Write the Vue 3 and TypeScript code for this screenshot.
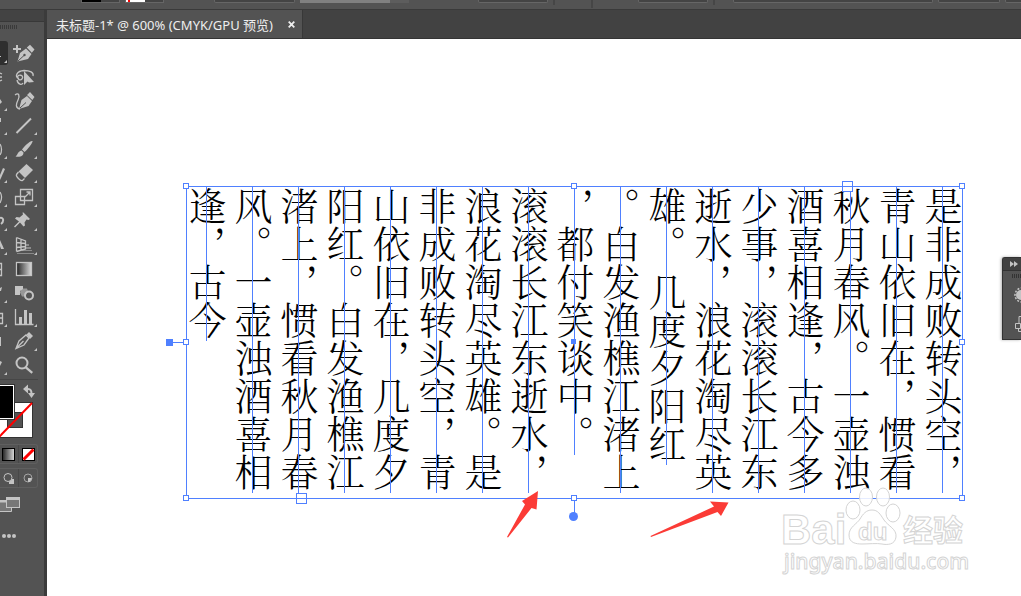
<script setup lang="ts">
const columns: string[] = [
  '是非成败转头空，',
  '青山依旧在，惯看',
  '秋月春风。一壶浊',
  '酒喜相逢，古今多',
  '少事，滚滚长江东',
  '逝水，浪花淘尽英',
  '雄。 几度夕阳红',
  '。白发渔樵江渚上',
  '，都付笑谈中。',
  '滚滚长江东逝水，',
  '浪花淘尽英雄。是',
  '非成败转头空，青',
  '山依旧在，几度夕',
  '阳红。白发渔樵江',
  '渚上，惯看秋月春',
  '风。一壶浊酒喜相',
  '逢，古今',
]

interface Tool {
  name: string
  more: boolean
  svg: string
  leftSvg: string
  leftMore: boolean
}

const tools: Tool[] = [
  { name: '添加锚点', more: false, leftMore: true, leftSvg: '<path d="M0 15h1v1h-1z"/>',
    svg: '<path d="M4 4h2v3h3v2h-3v3h-2v-3h-3v-2h3z"/><path d="M5.500 20.500 8 12l6-4.500 5.500 5.500-3.500 5zM14.800 6.600 18 3.800l4.500 4.700-2.700 3.200z"/><path class="cut" d="M6 20l6-5.500"/><circle cx="12.500" cy="14" r="1.200" fill="#535353"/>' },
  { name: '套索', more: false, leftMore: false, leftSvg: '<path class="ln" d="M0 8l2 1M0 12h2M0 16l2-1"/>',
    svg: '<path class="ln" d="M7 14c-5-3-2-8 5-8.500 6 0 10 2 9 5.500M5.500 12c1-3 6-2 5 1s-5 2-4-.500M5 15c1 5 5 5 6 3"/><path d="M12 6v14l3.500-3.500 1.500 1 5-.5z"/>' },
  { name: '曲率', more: false, leftMore: true, leftSvg: '<path d="M0 10l2 3-2 2z"/>',
    svg: '<path class="ln" d="M3 6c4-3 5 1 3 5s-3 8 2 9"/><path d="M7 20 9.500 11l5.500-4 5 5-3.500 5zM15 6 18 3l4.500 5-2.200 3z"/><path class="cut" d="M8 19l6-5.500"/>' },
  { name: '直线段', more: true, leftMore: true, leftSvg: '<path d="M0 5h1v4h-1z"/>', svg: '<path class="ln2" d="M4.500 20 19 5.500"/>' },
  { name: '画笔', more: true, leftMore: true, leftSvg: '<path class="ln" d="M0 7c2 3 2 8 0 11"/>',
    svg: '<path d="M20.500 4c1 1-6 10-8 11l-2.500-2.500c1-2 8.500-9.500 10.500-8.500zM9.500 13.500l2 2c0 4-4 5-8 4 2-1 2-5 6-6z"/>' },
  { name: '橡皮擦', more: true, leftMore: true, leftSvg: '<path d="M0 14l3-7 2 1-4 9-1 2z"/>',
    svg: '<path d="M14.500 3 21 9 13 17 6.500 10.500z"/><path class="ln" d="M6.500 11 4.500 13.500c-1 1.500 4 7 6 6l2-2"/>' },
  { name: '比例缩放', more: true, leftMore: true, leftSvg: '<path class="ln" d="M0 7c2 3 2 7 0 11"/>',
    svg: '<path class="ln" d="M8.500 4.500h12v11h-12zM3.500 11.500h9v8h-9zM13 12l5-5M14.500 7h3.500v3.500"/>' },
  { name: '操控变形', more: true, leftMore: true, leftSvg: '<path class="ln2" d="M0 9c4-1 4 4 1 6"/>',
    svg: '<path d="M11.500 3.500 18 10l-1.500 1-2-.5-2 3 .5 3-1.500 1-3.500-4-5 5-1-1 5-5-4-3 1.500-1.500 3 .500 3.500-3-.500-2z"/>' },
  { name: '透视网格', more: true, leftMore: true, leftSvg: '<path d="M0 7l4 9h-3l-1-3z"/>',
    svg: '<path class="ln" d="M4.500 4.500v14M4.500 4.500 13.500 8v8l-9 2.500M9 6.500v11M4.500 9.500l9 1M4.500 14.500l9-1"/><path d="M14 11h3v2h-3zM14 14h5v2h-5zM10 17h10v1h-10zM5 20h17v1h-17z" opacity=".5"/>' },
  { name: '渐变', more: false, leftMore: false, leftSvg: '<path class="ln" d="M0 6.500h1.500v12h-1.500M0 12.500h2"/>',
    svg: '<rect class="ln" x="4.500" y="5.500" width="15" height="13" style="fill:url(#ramp)"/>' },
  { name: '混合', more: false, leftMore: true, leftSvg: '<path d="M0 7l2-1-1 4h-1z"/>',
    svg: '<path d="M3 5h8v3l-3 2v4h-5z"/><path d="M9 7.500h6l1 3-3 5h-3l-2-4z" opacity=".6"/><circle class="ln2" cx="17" cy="14.500" r="4"/>' },
  { name: '柱形图', more: true, leftMore: true, leftSvg: '<path class="ln" d="M0 8.500h2.500v10h-2.500M0 13h2"/>',
    svg: '<path class="ln" d="M3.500 4v15.500h18"/><path d="M7 12h3v7h-3zM12 5h3v14h-3zM17 8h3v11h-3z"/>' },
  { name: '切片', more: true, leftMore: false, leftSvg: '<path d="M0 8h1v9h-1z"/>',
    svg: '<path class="ln" d="M4 19.500 7 12l7-6 3 3-5 7zM4.500 19l7-7"/><path d="M14.500 5.500 17 3l4 4-3 3z"/>' },
  { name: '缩放', more: false, leftMore: true, leftSvg: '<path d="M0 8l2 1-2 4z"/>',
    svg: '<circle class="ln2" cx="10" cy="10" r="5.500"/><path d="M14 13l7 6-1.500 1.800-7-6z"/>' },
]
</script>

<template>
  <div class="app">
    <header class="options">
      <span class="swatch black"></span>
      <span class="swatch red"></span>
      <span class="combo c1"></span>
      <span class="strip"></span>
      <span class="strip dim"></span>
      <span class="combo c2"></span>
      <span class="rule"></span>
      <span class="rule far"></span>
      <span class="combo c3"></span>
      <span class="rule near"></span>
      <span class="combo c4"></span>
      <span class="combo c5"></span>
      <span class="combo c6"></span>
    </header>

    <div class="body">
      <aside class="toolbar">
        <div class="tool-head"></div>
        <div class="grip"></div>
        <svg class="defs" width="0" height="0">
          <linearGradient id="ramp"><stop offset="0" stop-color="#222" /><stop offset="1" stop-color="#ddd" /></linearGradient>
        </svg>
        <div v-for="(t, i) in tools" :key="t.name" class="tool-row">
          <button class="tool half" :class="{ active: i === 0 }" :aria-label="t.name + '组'">
            <svg width="8" height="24" viewBox="0 0 8 24"><g v-html="t.leftSvg"></g><path v-if="t.leftMore" d="M7 19v3h-3z" /></svg>
          </button>
          <button class="tool" :aria-label="t.name">
            <svg width="28" height="24" viewBox="0 0 28 24"><g v-html="t.svg"></g><path v-if="t.more" d="M25 19v3h-3z" /></svg>
          </button>
        </div>
        <div class="divider"></div>
        <svg class="colors" width="44" height="64" viewBox="0 0 44 64">
          <path d="M0 22h33v36H0z" fill="#333" /><path d="M0 23h32v34H0z" fill="#fff" />
          <path d="M7 32h16v16H7z" fill="#333" /><path d="M8 33h14v14H8z" fill="#535353" />
          <path d="M-1 57 32 23" stroke="#f00" stroke-width="2" />
          <path d="M0 4h15v36H0z" fill="#333" /><path d="M0 5h14v34H0z" fill="#fff" /><path d="M0 6h13v32H0z" fill="#000" />
          <path d="M27 9c4-.5 4.500 2 4.500 5" fill="none" stroke="#c4c4c4" stroke-width="2" />
          <path d="M23 9l5-4.500v9zM28 13h7L31.500 18z" />
        </svg>
        <div class="modes">
          <button aria-label="渐变填色"><svg width="15" height="15" viewBox="0 0 15 15"><rect x="1.500" y="1.500" width="12" height="12" fill="url(#ramp)" stroke="#000" /></svg></button>
          <button aria-label="无填色"><svg width="15" height="15" viewBox="0 0 15 15"><rect x="1.500" y="1.500" width="12" height="12" fill="#fff" stroke="#000" /><path d="M2.500 12.500l10-10" stroke="#f00" stroke-width="3" /></svg></button>
        </div>
        <div class="modes">
          <button aria-label="背面绘图"><svg width="15" height="15" viewBox="0 0 15 15"><path d="M8 8h5v5H8z" /><circle cx="7" cy="6.500" r="4" fill="#535353" stroke="#c4c4c4" /></svg></button>
          <button aria-label="内部绘图"><svg width="15" height="15" viewBox="0 0 15 15"><circle cx="7" cy="7" r="4" fill="none" stroke="#a4a4a4" /><path d="M7 7h4l-2 4H7z" /></svg></button>
        </div>
        <button class="screen" aria-label="屏幕模式">
          <svg width="22" height="18" viewBox="0 0 22 18"><path d="M0 4h7v2H0z" /><path d="M0 6h11.500v9.500H0" fill="#777" stroke="#c4c4c4" /><rect x="6.500" y="1.500" width="13" height="10" fill="#777" stroke="#c4c4c4" /><path d="M6 1h14v3H6z" /></svg>
        </button>
        <button class="more" aria-label="编辑工具栏"><i></i><i></i><i></i></button>
      </aside>

      <section class="workspace">
        <nav class="tabs">
          <div class="tab">
            <span>未标题-1* @ 600% (CMYK/GPU 预览)</span>
            <button class="close" aria-label="关闭"><svg width="7" height="7" viewBox="0 0 7 7"><path d="M.7.700l5.600 5.600M6.300.700.700 6.300" stroke="#eee" stroke-width="1.800" /></svg></button>
          </div>
        </nav>

        <main class="canvas">
          <div class="frame">
            <p v-for="(c, i) in columns" :key="i" class="column">{{ c }}</p>
            <i class="h tl"></i><i class="h tc"></i><i class="h tr"></i>
            <i class="h ml"></i><i class="h mr"></i>
            <i class="h bl"></i><i class="h bc"></i><i class="h br"></i>
            <i class="port in"></i><i class="port out"></i>
            <i class="center"></i>
            <i class="stem-left"></i><i class="knob-left"></i>
            <i class="stem-down"></i><i class="knob-down"></i>
          </div>

          <svg class="arrow a1" width="34" height="50" viewBox="0 0 34 50"><path d="M1 48 19 15.500 16 12 32 2 30.500 20.500 25.500 19 2 48.500z" /></svg>
          <svg class="arrow a2" width="82" height="42" viewBox="0 0 82 42"><path d="M1.500 37 65 7.500 61 2.500 79.500 3.500 72 17 68.500 13 2 38z" /></svg>

          <svg class="watermark" width="200" height="96" viewBox="0 0 200 96">
            <g class="outline">
              <text x="0" y="62" class="bai">Bai</text>
              <ellipse cx="72" cy="28" rx="7" ry="9" /><ellipse cx="85" cy="15" rx="6.500" ry="9" />
              <ellipse cx="102" cy="15" rx="6.500" ry="9" /><ellipse cx="112" cy="31" rx="7" ry="9" />
              <path d="M91 28c6 0 8 4 12 10s13 9 12 17-9 8-14 7-14 0-20 0-13-1-13-9 8-11 11-16 6-9 12-9z" />
              <text x="77" y="58" class="du">du</text>
              <text x="122" y="59" class="jy">经验</text>
              <text x="3" y="87" class="url">jingyan.baidu.com</text>
            </g>
          </svg>

          <aside class="dock">
            <div class="dock-head"><svg width="8" height="6" viewBox="0 0 8 6"><path d="M0 0l4 3-4 3zM4 0l4 3-4 3z" /></svg></div>
            <div class="dock-grip"></div>
            <svg width="19" height="61" viewBox="0 0 19 61"><circle cx="19" cy="17" r="7" fill="none" stroke="#c4c4c4" stroke-width="1.500" stroke-dasharray="2 1.500" /><circle cx="18" cy="17" r="5" /><path d="M20 38.500h-4v7M12.500 45.500h5v5h-5zM15.500 51v2.500H20" fill="none" stroke="#c4c4c4" /></svg>
          </aside>
        </main>
      </section>
    </div>
  </div>
</template>

<style>
body {
  margin: 0;
}
.ln,
.ln2 {
  fill: none;
  stroke: #c4c4c4;
  stroke-width: 1.3;
}
.ln2 {
  stroke-width: 2;
}
.cut {
  fill: none;
  stroke: #535353;
  stroke-width: 1;
}
</style>

<style scoped>
.app {
  display: flex;
  flex-direction: column;
  min-height: 100vh;
  overflow: hidden;
  background: #535353;
  font-family: "Noto Sans", "Noto Sans CJK SC", sans-serif;
}
button {
  padding: 0;
  border: 0;
  background: none;
}
svg {
  display: block;
  fill: #c4c4c4;
}
.options {
  display: flex;
  height: 9px;
  overflow: hidden;
  padding-left: 81px;
  border-bottom: 1px solid #3a3a3a;
}
.options > span {
  flex: none;
  box-sizing: border-box;
}
.swatch {
  width: 39px;
  height: 3px;
  margin-right: 5px;
  border: 1px solid #666;
  border-top: 0;
  background: linear-gradient(90deg, #000 19px, #444 19px);
}
.swatch.red {
  background: linear-gradient(90deg, #fff 2px, #f00 2px, #f00 4px, #fff 4px, #fff 19px, #444 19px);
}
.combo {
  height: 3px;
  border: 1px solid #666;
  border-top: 0;
  border-radius: 0 0 2px 2px;
  background: #444;
}
.c1 { width: 81px; margin-left: 45px; }
.strip { width: 90px; height: 3px; margin-left: 5px; background: #808080; }
.strip.dim { width: 19px; margin: 0; background: #5d5d5d; }
.c2 { width: 70px; margin-left: 69px; }
.rule { width: 2px; height: 5px; margin-left: 5px; background: #464646; }
.rule.far { height: 8px; margin-left: 36px; }
.c3 { width: 70px; margin-left: 45px; }
.rule.near { margin-left: 5px; }
.c4 { width: 200px; margin-left: 18px; }
.c5 { width: 62px; margin-left: 5px; }
.c6 { width: 62px; margin-left: 5px; }

.body {
  display: flex;
  flex: 1;
}
.toolbar {
  flex: none;
  box-sizing: border-box;
  width: 47px;
  border-right: 3px solid #3b3b3b;
  overflow: hidden;
}
.tool-head {
  height: 11px;
  background: #434343;
  border-bottom: 1px solid #383838;
}
.grip {
  width: 18px;
  height: 4px;
  margin: 3px 0 12px;
  background: repeating-linear-gradient(90deg, #3a3a3a 0 1px, #535353 1px 2px);
}
.defs {
  position: absolute;
}
.tool-row {
  display: flex;
  gap: 4px;
  height: 24px;
}
.tool.half {
  width: 8px;
}
.tool.active {
  background: #2f2f2f;
  border-radius: 0 3px 3px 0;
}
.divider {
  height: 1px;
  margin: 2px 6px 0 0;
  background: #464646;
}
.modes {
  display: flex;
  width: 37px;
  margin-bottom: 4px;
  border: 1px solid #5f5f5f;
  border-left: 0;
  border-radius: 0 3px 3px 0;
}
.modes button {
  display: flex;
  align-items: center;
  height: 18px;
  width: 18px;
  padding-left: 1px;
}
.modes button + button {
  padding-left: 2px;
  border-left: 1px solid #484848;
}
.screen {
  display: block;
  margin-top: 8px;
}
.more {
  display: flex;
  gap: 1px;
  margin: 20px 0 0 2px;
}
.more i {
  width: 4px;
  height: 4px;
  border-radius: 50%;
  background: #c4c4c4;
}

.workspace {
  display: flex;
  flex: 1;
  flex-direction: column;
  min-width: 0;
}
.tabs {
  display: flex;
  height: 28px;
  background: #424242;
  border-bottom: 1px solid #343434;
}
.tab {
  display: flex;
  align-items: center;
  gap: 15px;
  padding: 0 7px 0 9px;
  border-right: 1px solid #383838;
  background: #535353;
  color: #eee;
  font-size: 13px;
  white-space: nowrap;
}
.canvas {
  position: relative;
  flex: 1;
  background: #fff;
}
.frame {
  position: absolute;
  left: 139px;
  top: 147px;
  display: flex;
  flex-direction: row-reverse;
  box-sizing: border-box;
  width: 777px;
  height: 313px;
  padding-left: 4px;
  border: 1px solid #4f80ff;
}
.column {
  position: relative;
  box-sizing: border-box;
  align-self: flex-start;
  flex: none;
  width: 46px;
  margin: 0;
  padding-bottom: 2px;
  right: -4px;
  writing-mode: vertical-rl;
  white-space: nowrap;
  color: #000;
  font: 300 38px/46px "Noto Serif CJK SC", "Noto Sans CJK SC", serif;
}
.column::after {
  content: "";
  position: absolute;
  top: 0;
  bottom: 0;
  left: 22px;
  width: 1px;
  background: #4f80ff;
}
.h {
  position: absolute;
  box-sizing: border-box;
  width: 6px;
  height: 6px;
  border: 1px solid #4f80ff;
  background: #fff;
}
.tl, .tc, .tr { top: -4px; }
.bl, .bc, .br { bottom: -3px; }
.ml, .mr { top: 152px; }
.tl, .ml, .bl { left: -4px; }
.tc, .bc { left: 384px; }
.tr, .mr, .br { right: -3px; }
.port {
  position: absolute;
  box-sizing: border-box;
  width: 11px;
  height: 11px;
  border: 1px solid #4f80ff;
  background: linear-gradient(#4f80ff, #4f80ff) 0 4px / 100% 1px no-repeat #fff;
}
.in { left: 655px; top: -6px; }
.out { left: 109px; bottom: -6px; }
.center {
  position: absolute;
  left: 384px;
  top: 152px;
  width: 5px;
  height: 5px;
  background: #4f80ff;
}
.stem-left {
  position: absolute;
  left: -14px;
  top: 155px;
  width: 10px;
  height: 1px;
  background: #4f80ff;
}
.knob-left {
  position: absolute;
  left: -21px;
  top: 152px;
  width: 7px;
  height: 7px;
  background: #4f80ff;
}
.stem-down {
  position: absolute;
  left: 387px;
  bottom: -15px;
  width: 1px;
  height: 12px;
  background: #4f80ff;
}
.knob-down {
  position: absolute;
  left: 382px;
  bottom: -23px;
  width: 9px;
  height: 9px;
  border-radius: 50%;
  background: #4f80ff;
}
.arrow {
  position: absolute;
  fill: #fb3b36;
}
.a1 { left: 459px; top: 450px; }
.a2 { left: 602px; top: 460px; }
.watermark {
  position: absolute;
  left: 734px;
  top: 443px;
}
.outline {
  fill: #fff;
  fill-opacity: 0.85;
  stroke: #d4d4d4;
  stroke-width: 1;
}
.outline text {
  font-family: "Liberation Sans", "Noto Sans CJK SC", sans-serif;
  font-weight: 700;
}
.bai { font-size: 42px; }
.outline .du { font-size: 24px; }
.jy { font-size: 30px; }
.outline .url {
  font-family: "Noto Sans", sans-serif;
  font-size: 21px;
  font-weight: 500;
}
.dock {
  position: absolute;
  right: 0;
  top: 218px;
  width: 18px;
  border: 1px solid #333;
  border-right: 0;
  border-radius: 3px 0 0 0;
  overflow: hidden;
  background: #535353;
  box-shadow: -1px 0 3px rgba(0, 0, 0, 0.3);
}
.dock-head {
  display: flex;
  align-items: center;
  height: 12px;
  padding-left: 7px;
  background: #424242;
  border-bottom: 1px solid #333;
}
.dock-grip {
  height: 4px;
  margin: 3px 0 0 9px;
  background: repeating-linear-gradient(90deg, #333 0 1px, #535353 1px 2px);
}
</style>
